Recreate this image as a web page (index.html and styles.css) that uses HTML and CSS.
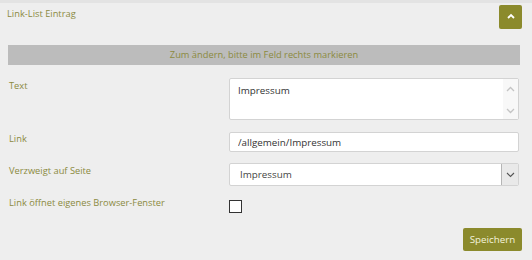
FILE: index.html
```html
<!DOCTYPE html>
<html lang="de">
<head>
<meta charset="utf-8">
<title>Link-List Eintrag</title>
<link rel="stylesheet" href="styles.css">
</head>
<body>
<div class="panel">
  <div class="header">
    <div class="title">Link-List Eintrag</div>
    <button class="collapse" type="button" aria-label="Einklappen">
      <svg width="8" height="6" viewBox="0 0 8 6"><path d="M1 5 L4 2 L7 5" fill="none" stroke="#fff" stroke-width="1.8"/></svg>
    </button>
  </div>
  <div class="hint">Zum ändern, bitte im Feld rechts markieren</div>
  <div class="form">
    <div class="row row-text">
      <label class="label">Text</label>
      <div class="field textarea-box">
        <textarea class="textarea">Impressum</textarea>
        <div class="scroll">
          <svg width="9" height="6" viewBox="0 0 9 6"><path d="M1 5 L4.5 1.5 L8 5" fill="none" stroke="#c4c4c4" stroke-width="1.3"/></svg>
          <svg width="9" height="6" viewBox="0 0 9 6"><path d="M1 1 L4.5 4.5 L8 1" fill="none" stroke="#c4c4c4" stroke-width="1.3"/></svg>
        </div>
      </div>
    </div>
    <div class="row row-link">
      <label class="label">Link</label>
      <input class="field input" type="text" value="/allgemein/Impressum">
    </div>
    <div class="row row-select">
      <label class="label">Verzweigt auf Seite</label>
      <div class="field select-box">
        <select class="select"><option>Impressum</option></select>
        <div class="select-btn">
          <svg width="9" height="6" viewBox="0 0 9 6"><path d="M1 1 L4.5 4.5 L8 1" fill="none" stroke="#555" stroke-width="1.1"/></svg>
        </div>
      </div>
    </div>
    <div class="row row-check">
      <label class="label">Link öffnet eigenes Browser-Fenster</label>
      <span class="checkbox"></span>
    </div>
  </div>
  <div class="actions">
    <button class="save" type="button">Speichern</button>
  </div>
</div>
</body>
</html>
```
FILE: styles.css
```css
html, body {
  margin: 0;
  padding: 0;
  background: #e3e3e3;
}
body {
  font-family: "Open Sans", "Noto Sans", sans-serif;
  font-size: 9.3px;
  color: #8b8a3e;
}
.panel {
  margin-top: 3px;
  background: #eeeeee;
  height: 257px;
  padding: 2px 10px 0 8px;
  box-sizing: border-box;
}
.header {
  display: flex;
  justify-content: space-between;
  align-items: flex-start;
}
.title {
  padding-top: 1px;
  margin-left: -1px;
  line-height: 15px;
}
.collapse {
  width: 23px;
  height: 24px;
  margin: 0;
  padding: 0;
  border: none;
  border-radius: 2px;
  background: #8b8a2c;
  display: flex;
  align-items: center;
  justify-content: center;
}
.collapse svg { display: block; margin-top: -2px; }
.hint {
  margin-top: 16px;
  margin-right: 2px;
  height: 20px;
  line-height: 20px;
  background: #bcbcbc;
  text-align: center;
  color: #8b8a3e;
}
.form {
  margin-top: 13px;
}
.row {
  display: flex;
  align-items: flex-start;
}
.label {
  width: 221px;
  flex: none;
  line-height: 12px;
  padding-left: 1px;
  box-sizing: border-box;
}
.row-text .label { padding-top: 2px; }
.row-link { margin-top: 12px; }
.row-link .label { padding-top: 1px; }
.row-select { margin-top: 11px; }
.row-select .label { padding-top: 2px; }
.row-check { margin-top: 10px; }
.row-check .label { padding-top: 1px; }
.field {
  width: 290px;
  box-sizing: border-box;
  border: 1px solid #d3d3d3;
  border-radius: 2px;
  background: #fff;
  font-family: inherit;
  font-size: 9.8px;
  color: #333;
}
.textarea-box {
  height: 42px;
  display: flex;
}
.textarea {
  flex: 1;
  border: none;
  resize: none;
  outline: none;
  padding: 4px 0 0 8px;
  margin: 0;
  font: inherit;
  color: inherit;
  background: transparent;
  overflow: hidden;
  line-height: 15px;
}
.scroll {
  width: 15px;
  background: #f8f8f8;
  display: flex;
  flex-direction: column;
  justify-content: space-between;
  align-items: center;
  padding: 7px 0 5px;
}
.scroll svg { display: block; }
.input {
  height: 20px;
  padding: 0 8px;
  outline: none;
  line-height: 18px;
}
.select-box {
  height: 23px;
  display: flex;
  overflow: hidden;
}
.select {
  flex: 1;
  border: none;
  outline: none;
  appearance: none;
  -webkit-appearance: none;
  background: transparent;
  font: inherit;
  color: #444;
  padding: 0 0 0 10px;
  margin: 0;
}
.select-btn {
  width: 16px;
  background: #e9e9e9;
  border-left: 1px solid #b5b5b5;
  display: flex;
  align-items: center;
  justify-content: center;
}
.select-btn svg { display: block; }
.checkbox {
  width: 13px;
  height: 13px;
  box-sizing: border-box;
  border: 1px solid #333;
  background: #fff;
  margin-top: 4px;
}
.actions {
  display: flex;
  justify-content: flex-end;
  margin-top: 15px;
}
.save {
  width: 59px;
  height: 23px;
  margin: 0;
  padding: 0;
  border: none;
  border-radius: 2px;
  background: #8b8a2c;
  color: #f4f4dc;
  font-family: inherit;
  font-size: 9.8px;
}
```
